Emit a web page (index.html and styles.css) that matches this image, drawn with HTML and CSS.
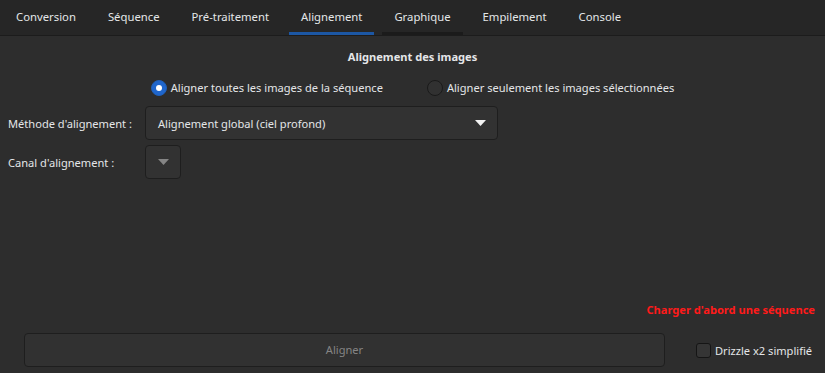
FILE: index.html
```html
<!DOCTYPE html>
<html lang="fr">
<head>
<meta charset="utf-8">
<link rel="stylesheet" href="styles.css">
</head>
<body>
<div class="app">
  <div class="tabs">
    <div class="tab">Conversion</div>
    <div class="tab">Séquence</div>
    <div class="tab">Pré-traitement</div>
    <div class="tab active">Alignement</div>
    <div class="tab hover">Graphique</div>
    <div class="tab">Empilement</div>
    <div class="tab">Console</div>
  </div>
  <div class="panel">
    <div class="title">Alignement des images</div>
    <div class="radios">
      <label class="radio"><span class="dot on"></span>Aligner toutes les images de la séquence</label>
      <label class="radio"><span class="dot"></span>Aligner seulement les images sélectionnées</label>
    </div>
    <div class="row method">
      <span class="label">Méthode d'alignement :</span>
      <div class="combo">
        <span>Alignement global (ciel profond)</span>
        <svg class="arrow" width="11" height="6" viewBox="0 0 11 6"><path d="M0 0H11L5.5 6Z" fill="#f2f2f2"/></svg>
      </div>
    </div>
    <div class="row canal">
      <span class="label">Canal d'alignement :</span>
      <div class="combo small">
        <svg class="arrow" width="11" height="6" viewBox="0 0 11 6"><path d="M0 0H11L5.5 6Z" fill="#858585"/></svg>
      </div>
    </div>
    <div class="spacer"></div>
    <div class="warn">Charger d'abord une séquence</div>
    <div class="bottom">
      <div class="button">Aligner</div>
      <label class="check"><span class="box"></span>Drizzle x2 simplifié</label>
    </div>
  </div>
</div>
</body>
</html>
```

FILE: styles.css
```css
* { box-sizing: border-box; }
html, body { margin: 0; padding: 0; background: #2d2d2d; }
body {
  font-family: "Noto Sans", "Open Sans", sans-serif;
  font-size: 11.1px;
  color: #e4e6e8;
}
.app { width: 825px; height: 373px; display: flex; flex-direction: column; overflow: hidden; }
.tabs {
  height: 36px;
  background: #262626;
  border-bottom: 1px solid #1c1c1c;
  display: flex;
  padding-left: 4px;
  flex-shrink: 0;
  font-size: 11.3px;
}
.tab {
  margin: 0 4px;
  padding: 0 12px;
  height: 35px;
  line-height: 33px;
  border-bottom: 3px solid transparent;
  white-space: nowrap;
}
.tab:first-child { margin-left: 0; }
.tab.active { border-bottom-color: #1c57a4; }
.tab.hover { border-bottom-color: #1b1b1b; }
.panel { flex: 1; display: flex; flex-direction: column; }
.title {
  margin-top: 12px;
  height: 18px;
  line-height: 18px;
  text-align: center;
  font-weight: bold;
}
.radios {
  margin-top: 13px;
  height: 18px;
  display: flex;
  justify-content: center;
  gap: 44px;
}
.radio { display: flex; align-items: center; gap: 4px; line-height: 18px; white-space: nowrap; }
.dot {
  width: 16px; height: 16px; border-radius: 50%;
  background: #313131;
  border: 1px solid #1a1a1a;
  display: inline-block;
  position: relative;
  flex-shrink: 0;
}
.dot.on { background: #1f66cc; border-color: #1f5fb8; }
.dot.on::after {
  content: "";
  position: absolute;
  left: 4px; top: 4px;
  width: 6px; height: 6px;
  border-radius: 50%;
  background: #ffffff;
}
.row { display: flex; align-items: center; }
.method { margin-top: 9px; }
.canal { margin-top: 5px; }
.label { width: 145px; flex-shrink: 0; padding-left: 8px; white-space: nowrap; }
.combo {
  height: 34px;
  width: 353px;
  flex-shrink: 0;
  background: #323232;
  border: 1px solid #1e1e1e;
  border-radius: 4px;
  display: flex;
  align-items: center;
  justify-content: space-between;
  padding: 0 11px 0 12px;
}
.combo.small { width: 36px; padding: 0; justify-content: center; }
.arrow { display: block; }
.spacer { flex: 1; }
.warn {
  height: 18px;
  line-height: 18px;
  text-align: right;
  padding-right: 10px;
  color: #ff1a1a;
  font-weight: bold;
}
.bottom {
  margin-top: 14px;
  margin-bottom: 6px;
  display: flex;
  align-items: center;
  padding-left: 24px;
}
.button {
  width: 641px;
  flex-shrink: 0;
  height: 34px;
  line-height: 32px;
  text-align: center;
  background: #313131;
  border: 1px solid #1e1e1e;
  border-radius: 4px;
  color: #858585;
}
.check { margin-left: 31px; display: flex; align-items: center; gap: 4px; white-space: nowrap; }
.box {
  width: 15px; height: 15px;
  background: #353535;
  border: 1px solid #151515;
  border-radius: 3px;
  display: inline-block;
  flex-shrink: 0;
}
```
